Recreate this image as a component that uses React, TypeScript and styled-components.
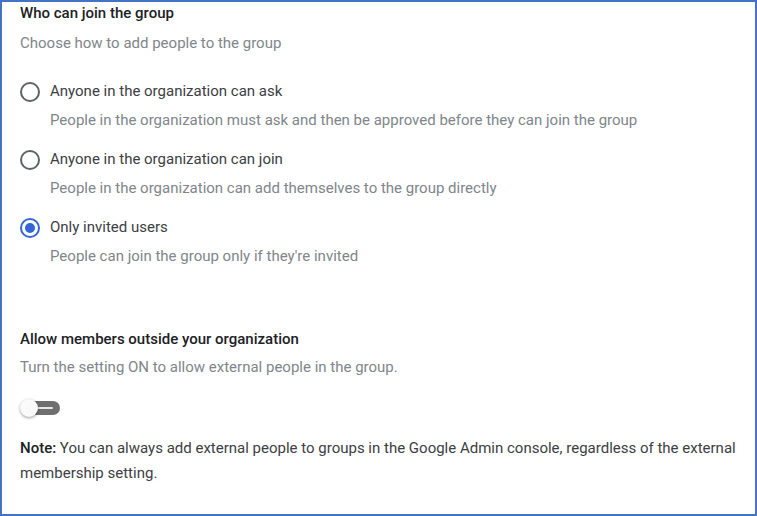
import React, { useState } from "react";
import styled, { createGlobalStyle } from "styled-components";

const GlobalStyle = createGlobalStyle`
  html, body {
    margin: 0;
    padding: 0;
    background: #ffffff;
  }
  body {
    font-family: Roboto, "Liberation Sans", Arial, sans-serif;
  }
`;

const options = [
  {
    id: "ask",
    label: "Anyone in the organization can ask",
    description:
      "People in the organization must ask and then be approved before they can join the group",
  },
  {
    id: "join",
    label: "Anyone in the organization can join",
    description: "People in the organization can add themselves to the group directly",
  },
  {
    id: "invited",
    label: "Only invited users",
    description: "People can join the group only if they're invited",
  },
];

export default function App() {
  const [selected, setSelected] = useState("invited");
  const [external, setExternal] = useState(false);

  return (
    <>
      <GlobalStyle />
      <Frame>
        <Section>
          <Heading>Who can join the group</Heading>
          <Hint $top={10}>Choose how to add people to the group</Hint>
          <OptionList>
            {options.map((option) => (
              <Option key={option.id}>
                <OptionRow onClick={() => setSelected(option.id)}>
                  <Radio $checked={selected === option.id} />
                  <OptionLabel>{option.label}</OptionLabel>
                </OptionRow>
                <OptionDescription>{option.description}</OptionDescription>
              </Option>
            ))}
          </OptionList>
        </Section>

        <Section $top={62}>
          <Heading>Allow members outside your organization</Heading>
          <Hint $top={8}>Turn the setting ON to allow external people in the group.</Hint>
          <Toggle
            $on={external}
            onClick={() => setExternal(!external)}
            aria-label="Allow external members"
          >
            <Track $on={external} />
            <Thumb $on={external} />
          </Toggle>
          <Note>
            <NoteLabel>Note:</NoteLabel> You can always add external people to groups in the
            Google Admin console, regardless of the external membership setting.
          </Note>
        </Section>
      </Frame>
    </>
  );
}

const Frame = styled.div`
  box-sizing: border-box;
  width: 757px;
  height: 516px;
  border: 2px solid #4472c4;
  padding: 1px 18px 0 18px;
  overflow: hidden;
`;

const Section = styled.div<{ $top?: number }>`
  display: flex;
  flex-direction: column;
  margin-top: ${(p) => p.$top ?? 0}px;
`;

const Heading = styled.div`
  font-size: 15px;
  line-height: 20px;
  font-weight: 500;
  color: #202124;
`;

const Hint = styled.div<{ $top: number }>`
  margin-top: ${(p) => p.$top}px;
  font-size: 15px;
  line-height: 20px;
  color: #80868b;
`;

const OptionList = styled.div`
  display: flex;
  flex-direction: column;
  gap: 18px;
  margin-top: 28px;
`;

const Option = styled.div`
  display: flex;
  flex-direction: column;
`;

const OptionRow = styled.label`
  display: flex;
  align-items: center;
  gap: 10px;
  height: 21px;
  cursor: pointer;
`;

const Radio = styled.span<{ $checked: boolean }>`
  box-sizing: border-box;
  width: 20px;
  height: 20px;
  border-radius: 50%;
  border: 2px solid ${(p) => (p.$checked ? "#3367d6" : "#5f6368")};
  display: flex;
  align-items: center;
  justify-content: center;
  flex-shrink: 0;

  &::after {
    content: "";
    width: 10px;
    height: 10px;
    border-radius: 50%;
    background: #3367d6;
    display: ${(p) => (p.$checked ? "block" : "none")};
  }
`;

const OptionLabel = styled.span`
  font-size: 15px;
  line-height: 21px;
  color: #3c4043;
`;

const OptionDescription = styled.div`
  margin-top: 8px;
  padding-left: 30px;
  font-size: 15px;
  line-height: 21px;
  color: #80868b;
`;

const Toggle = styled.button<{ $on: boolean }>`
  position: relative;
  margin-top: 22px;
  width: 42px;
  height: 18px;
  padding: 0;
  border: none;
  background: none;
  cursor: pointer;
`;

const Track = styled.span<{ $on: boolean }>`
  position: absolute;
  left: 6px;
  top: 2px;
  width: 34px;
  height: 14px;
  box-sizing: border-box;
  border-radius: 7px;
  background: ${(p) => (p.$on ? "#8ab4f8" : "#6f6f6f")};

  &::after {
    content: "";
    position: absolute;
    left: 8px;
    right: 7px;
    top: 6px;
    height: 2px;
    border-radius: 1px;
    background: #e8e8e8;
  }
`;

const Thumb = styled.span<{ $on: boolean }>`
  position: absolute;
  top: 0;
  left: ${(p) => (p.$on ? "24px" : "0")};
  width: 18px;
  height: 18px;
  border-radius: 50%;
  background: #fafafa;
  box-shadow: 0 1px 3px rgba(0, 0, 0, 0.4);
`;

const Note = styled.p`
  margin: 19px 0 0;
  font-size: 15px;
  line-height: 25px;
  color: #3c4043;
`;

const NoteLabel = styled.strong`
  font-weight: 500;
  color: #202124;
`;
